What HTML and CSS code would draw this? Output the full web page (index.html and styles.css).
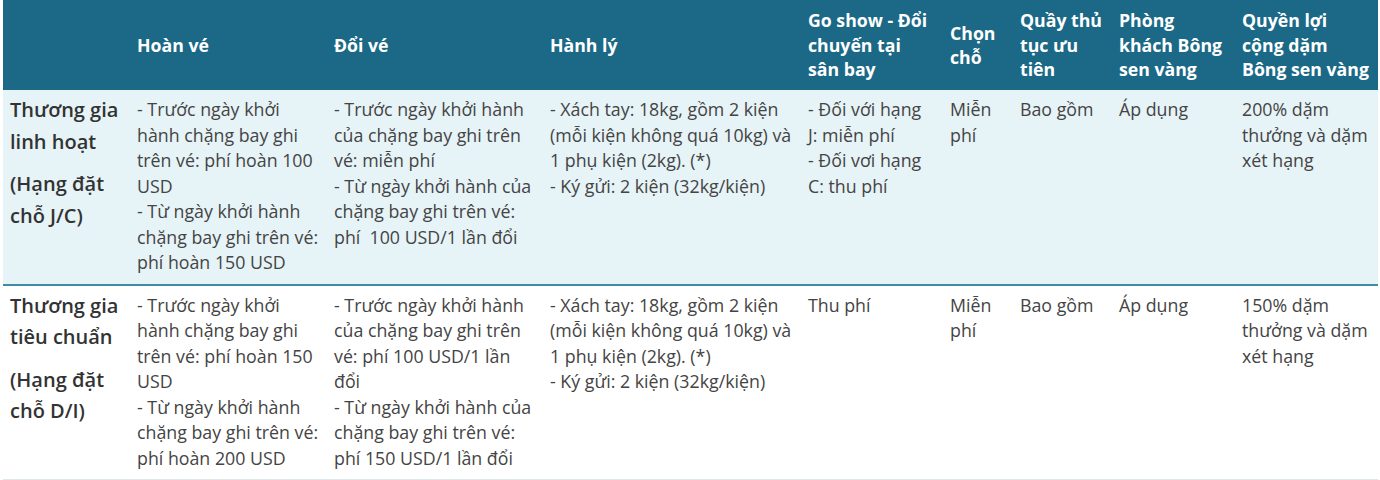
FILE: index.html
```html
<!DOCTYPE html>
<html lang="vi">
<head>
<meta charset="utf-8">
<link rel="stylesheet" href="styles.css">
</head>
<body>
<div class="wrap">
<table class="fare">
  <colgroup>
    <col class="c1"><col class="c2"><col class="c3"><col class="c4"><col class="c5"><col class="c6"><col class="c7"><col class="c8"><col class="c9">
  </colgroup>
  <thead>
    <tr>
      <th></th>
      <th>Hoàn vé</th>
      <th>Đổi vé</th>
      <th>Hành lý</th>
      <th class="narrow">Go show - Đổi chuyến tại sân bay</th>
      <th>Chọn chỗ</th>
      <th>Quầy thủ tục ưu tiên</th>
      <th>Phòng khách Bông sen vàng</th>
      <th class="last">Quyền lợi cộng dặm Bông sen vàng</th>
    </tr>
  </thead>
  <tbody>
    <tr class="alt">
      <td class="rowhead"><p>Thương gia linh hoạt</p><p>(Hạng đặt chỗ J/C)</p></td>
      <td>- Trước ngày khởi hành chặng bay ghi trên vé: phí hoàn 100 USD<br>- Từ ngày khởi hành chặng bay ghi trên vé: phí hoàn 150 USD</td>
      <td>- Trước ngày khởi hành của chặng bay ghi trên vé: miễn phí<br>- Từ ngày khởi hành của chặng bay ghi trên vé: phí&nbsp; 100 USD/1 lần đổi</td>
      <td>- Xách tay: 18kg, gồm 2 kiện (mỗi kiện không quá 10kg) và 1 phụ kiện (2kg). (*)<br>- Ký gửi: 2 kiện (32kg/kiện)</td>
      <td class="narrow">- Đối với hạng J: miễn phí<br>- Đối vơi hạng C: thu phí</td>
      <td>Miễn phí</td>
      <td>Bao gồm</td>
      <td>Áp dụng</td>
      <td class="last">200% dặm thưởng và dặm xét hạng</td>
    </tr>
    <tr>
      <td class="rowhead"><p>Thương gia tiêu chuẩn</p><p>(Hạng đặt chỗ D/I)</p></td>
      <td>- Trước ngày khởi hành chặng bay ghi trên vé: phí hoàn 150 USD<br>- Từ ngày khởi hành chặng bay ghi trên vé: phí hoàn 200 USD</td>
      <td>- Trước ngày khởi hành của chặng bay ghi trên vé: phí 100 USD/1 lần đổi<br>- Từ ngày khởi hành của chặng bay ghi trên vé: phí 150 USD/1 lần đổi</td>
      <td>- Xách tay: 18kg, gồm 2 kiện (mỗi kiện không quá 10kg) và 1 phụ kiện (2kg). (*)<br>- Ký gửi: 2 kiện (32kg/kiện)</td>
      <td class="narrow">Thu phí</td>
      <td>Miễn phí</td>
      <td>Bao gồm</td>
      <td>Áp dụng</td>
      <td class="last">150% dặm thưởng và dặm xét hạng</td>
    </tr>
  </tbody>
</table>
</div>
</body>
</html>
```
FILE: styles.css
```css
html, body {
  margin: 0;
  padding: 0;
  background: #ffffff;
}
.wrap {
  padding: 0 3px;
}
.fare {
  width: 1375px;
  border-collapse: collapse;
  table-layout: fixed;
  font-family: "Open Sans", "Liberation Sans", sans-serif;
  font-size: 17.8px;
  color: #444444;
}
.c1 { width: 127px; }
.c2 { width: 197px; }
.c3 { width: 216px; }
.c4 { width: 258px; }
.c5 { width: 142px; }
.c6 { width: 70px; }
.c7 { width: 99px; }
.c8 { width: 123px; }
.c9 { width: 143px; }
.fare th {
  background: #1b6986;
  color: #ffffff;
  font-size: 17.7px;
  font-weight: 700;
  text-align: left;
  vertical-align: middle;
  line-height: 24.5px;
  padding: 8px 4px 8px 7px;
  height: 74px;
}
.fare td {
  vertical-align: top;
  line-height: 25.5px;
  padding: 7px 4px 8px 7px;
  text-align: left;
}
.fare th.narrow,
.fare td.narrow {
  padding-right: 11px;
}
.fare th.last,
.fare td.last {
  padding-right: 6px;
}
.fare tbody tr.alt td {
  background: #e6f3f7;
  border-bottom: 2px solid #3d8ea3;
}
.fare tbody tr:last-child td {
  border-bottom: 2px solid #dbe7ea;
}
.fare td.rowhead {
  font-size: 20px;
  font-weight: 600;
  color: #333333;
  line-height: 31.5px;
  padding-top: 4px;
}
.rowhead p {
  margin: 0 0 11px 0;
}
.rowhead p:last-child {
  margin-bottom: 0;
}
```
